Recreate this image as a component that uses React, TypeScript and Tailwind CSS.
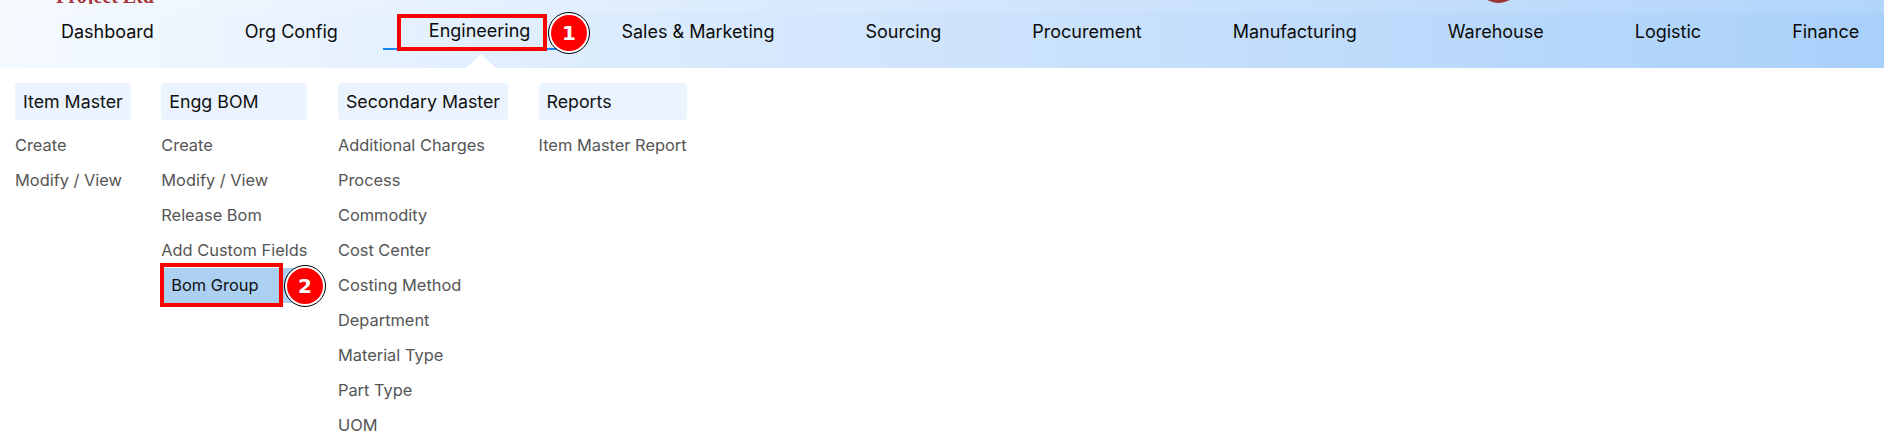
import React from "react";

const navItems = ["Dashboard", "Org Config", "Engineering", "Sales & Marketing", "Sourcing", "Procurement", "Manufacturing", "Warehouse", "Logistic", "Finance"];

const menus = [
  { title: "Item Master", links: ["Create", "Modify / View"] },
  { title: "Engg BOM", links: ["Create", "Modify / View", "Release Bom", "Add Custom Fields", "Bom Group"] },
  {
    title: "Secondary Master",
    links: ["Additional Charges", "Process", "Commodity", "Cost Center", "Costing Method", "Department", "Material Type", "Part Type", "UOM"],
  },
  { title: "Reports", links: ["Item Master Report"] },
];

const Step = ({ n, className }: { n: number; className: string }) => (
  <div className={`absolute flex h-[40px] w-[40px] items-center justify-center rounded-full border-2 border-white bg-[#ff0000] text-[20px] font-bold text-white outline outline-1 outline-black font-['DejaVu_Sans',sans-serif] ${className}`}>
    {n}
  </div>
);

export default function App() {
  return (
    <div className="relative h-[442px] w-[1884px] overflow-hidden bg-white font-['Inter',sans-serif]">
      <div className="relative h-[68px] bg-gradient-to-r from-[#f5faff] via-[#cfe4fc] to-[#a9d0fa]">
        <div className="h-[13px] bg-white/10">
          <div className="flex h-[4px] items-end overflow-hidden pl-[56px] text-[20px] font-bold leading-none text-[#a8343a]">
            <span className="mb-[-2px] shrink-0 font-['Liberation_Serif',serif]">Project Ltd</span>
          </div>
        </div>
        <nav className="flex pl-[15.5px]">
          {navItems.map((item) => (
            <a
              key={item}
              className={`flex h-[37px] items-center whitespace-nowrap px-[45.5px] text-[18px] text-[#0b0b0b] ${
                item === "Engineering" ? "border-b-2 border-[#1383f5]" : ""
              }`}
            >
              {item}
            </a>
          ))}
        </nav>
        <div className="absolute bottom-0 left-[466px] h-0 w-0 border-x-[15px] border-b-[14px] border-x-transparent border-b-white" />
        <div className="absolute left-[1477px] top-[-40px] h-[43px] w-[43px] rounded-full bg-[#9c3532]" />
      </div>

      <div className="flex items-start gap-[30.5px] pl-[15px] pt-[15px]">
        {menus.map((menu) => (
          <div key={menu.title} className="flex flex-col">
            <h3 className="rounded-[4px] bg-[#eaf3fe] px-[8px] py-[7px] text-[17.8px] font-normal leading-[23px] whitespace-nowrap text-[#111]">
              {menu.title}
            </h3>
            <ul className="mt-[8px] flex flex-col">
              {menu.links.map((link) => (
                <li
                  key={link}
                  className={`flex h-[35px] items-center whitespace-nowrap text-[16.4px] ${
                    link === "Bom Group" ? "bg-[#acd0f2] pl-[10px] text-[#111]" : "text-[#555]"
                  }`}
                >
                  {link}
                </li>
              ))}
            </ul>
          </div>
        ))}
      </div>

      <div className="absolute left-[397px] top-[14px] h-[37px] w-[150px] border-[4px] border-[#ff0000]" />
      <Step n={1} className="left-[549px] top-[13px]" />
      <div className="absolute left-[160px] top-[263px] h-[44px] w-[123px] border-[4px] border-[#ff0000]" />
      <Step n={2} className="left-[285px] top-[266px]" />
    </div>
  );
}
